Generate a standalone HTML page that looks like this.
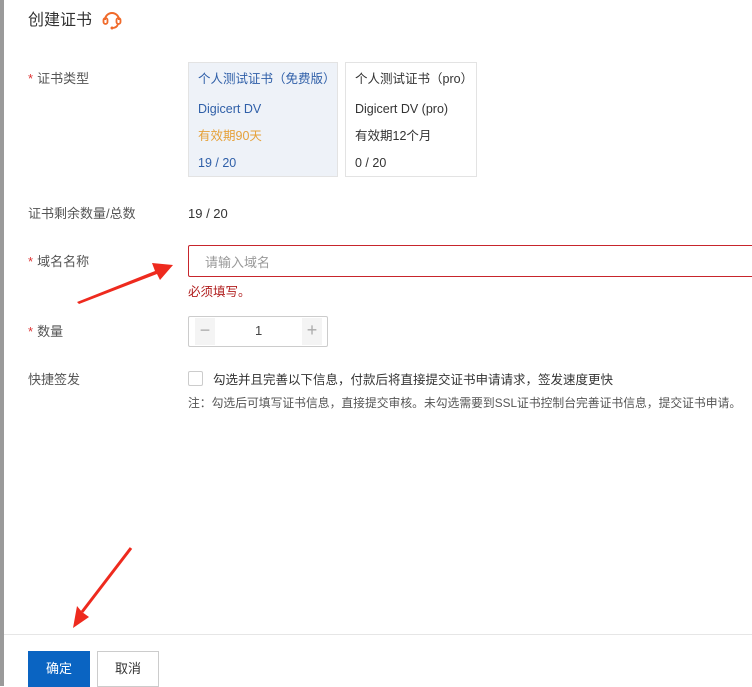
<!DOCTYPE html>
<html><head><meta charset="utf-8"><style>
*{margin:0;padding:0;box-sizing:border-box}
body{width:752px;height:686px;overflow:hidden;background:#fff;font-family:"Liberation Sans","Noto Sans CJK SC",sans-serif;position:relative;color:#333;line-height:18px}
.a{position:absolute;white-space:nowrap}
.lbl{font-size:13px;color:#555}
.st{color:#d33;margin-right:4px}
.card{position:absolute;top:62px;height:115px;border:1px solid #e3e3e3;font-size:12.5px}
.card div{position:absolute;left:9px;white-space:nowrap}
</style></head><body>
<div class="a" style="left:0;top:0;width:4px;height:686px;background:#9a9a9a"></div>
<div class="a" style="left:28px;top:11px;font-size:16px;line-height:20px;color:#333">创建证书</div>
<svg class="a" style="left:101px;top:8px" width="22" height="22" viewBox="0 0 22 22"><path d="M4 12 A7 7 0 0 1 18 12" fill="none" stroke="#f06a2a" stroke-width="2"/><rect x="2.5" y="10" width="4" height="6" rx="2" fill="none" stroke="#f06a2a" stroke-width="1.8"/><rect x="15.5" y="10" width="4" height="6" rx="2" fill="none" stroke="#f06a2a" stroke-width="1.8"/><path d="M17 16 Q16 20 11 20" fill="none" stroke="#f06a2a" stroke-width="1.8"/><circle cx="11" cy="20" r="1.5" fill="#f06a2a"/></svg>

<div class="a lbl" style="left:28px;top:70px"><span class="st">*</span>证书类型</div>
<div class="card" style="left:188px;width:150px;background:#eef2f8;color:#2f5fa8">
<div style="top:7px">个人测试证书（免费版）</div>
<div style="top:37px">Digicert DV</div>
<div style="top:64px;color:#e5a13a">有效期90天</div>
<div style="top:91px">19 / 20</div>
</div>
<div class="card" style="left:345px;width:132px;background:#fff;color:#333">
<div style="top:7px">个人测试证书（pro）</div>
<div style="top:37px">Digicert DV (pro)</div>
<div style="top:64px">有效期12个月</div>
<div style="top:91px">0 / 20</div>
</div>

<div class="a lbl" style="left:28px;top:205px">证书剩余数量/总数</div>
<div class="a" style="left:188px;top:205px;font-size:13px;color:#333">19 / 20</div>

<div class="a lbl" style="left:28px;top:253px"><span class="st">*</span>域名名称</div>
<div class="a" style="left:188px;top:245px;width:570px;height:32px;border:1px solid #c7252c;border-radius:2px"></div>
<div class="a" style="left:205px;top:254px;font-size:13px;color:#999">请输入域名</div>
<div class="a" style="left:188px;top:283px;font-size:12.5px;color:#b01c1c">必须填写。</div>

<div class="a lbl" style="left:28px;top:323px"><span class="st">*</span>数量</div>
<div class="a" style="left:188px;top:316px;width:140px;height:31px;border:1px solid #ccc;border-radius:2px"></div>
<div class="a" style="left:195px;top:318px;width:20px;height:27px;background:#f4f4f4;color:#aaa;font-size:18px;text-align:center;line-height:25px">−</div>
<div class="a" style="left:302px;top:318px;width:20px;height:27px;background:#f4f4f4;color:#aaa;font-size:18px;text-align:center;line-height:25px">+</div>
<div class="a" style="left:255px;top:322px;font-size:13px;color:#444">1</div>

<div class="a lbl" style="left:28px;top:371px">快捷签发</div>
<div class="a" style="left:188px;top:371px;width:15px;height:15px;border:1px solid #ccc;border-radius:2px"></div>
<div class="a" style="left:213px;top:371px;font-size:12.5px;color:#333">勾选并且完善以下信息，付款后将直接提交证书申请请求，签发速度更快</div>
<div class="a" style="left:188px;top:394px;font-size:11.8px;color:#555">注：勾选后可填写证书信息，直接提交审核。未勾选需要到SSL证书控制台完善证书信息，提交证书申请。</div>

<div class="a" style="left:4px;top:634px;width:748px;height:1px;background:#e6e6e6"></div>
<div class="a" style="left:28px;top:651px;width:62px;height:36px;background:#0a64c2;color:#fff;font-size:13px;text-align:center;line-height:36px">确定</div>
<div class="a" style="left:97px;top:651px;width:62px;height:36px;border:1px solid #ccc;color:#333;font-size:13px;text-align:center;line-height:34px">取消</div>

<svg class="a" style="left:0;top:0" width="752" height="686">
<path d="M77 302 L155 271 L152 263 L173 265 L160 280 L157 274 L79 304 Z" fill="#ee2a1e"/>
<path d="M131 548 L82 612" stroke="#ee2a1e" stroke-width="3"/>
<path d="M73 628 L77 606 L82 612 L89 617 Z" fill="#ee2a1e"/>
</svg>
</body></html>
